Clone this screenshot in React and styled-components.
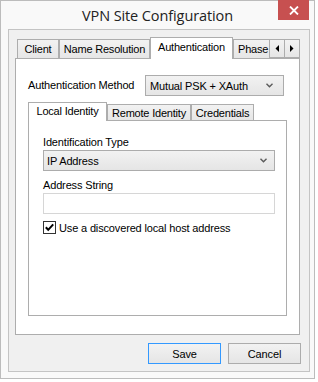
import React from "react";
import styled, { createGlobalStyle } from "styled-components";

const GlobalStyle = createGlobalStyle`
  html, body { margin: 0; padding: 0; background: #ffffff; }
  body { font-family: "Liberation Sans", Arial, sans-serif; font-size: 11px; color: #000; }
  * { box-sizing: border-box; }
`;

const Window = styled.div`
  width: 315px;
  height: 379px;
  border: 1px solid #bcbcbc;
  background: #f9f9f9;
  display: flex;
  flex-direction: column;
`;

const TitleBar = styled.div`
  height: 28px;
  flex-shrink: 0;
  display: grid;
  grid-template-columns: 1fr auto 1fr;
  align-items: center;
`;

const Title = styled.div`
  grid-column: 2;
  font-family: "Open Sans", "Liberation Sans", sans-serif;
  font-size: 14.5px;
  letter-spacing: -0.1px;
  color: #222;
  white-space: nowrap;
  padding-top: 1px;
`;

const CloseButton = styled.div`
  grid-column: 3;
  justify-self: end;
  align-self: start;
  margin-top: -1px;
  margin-right: 5px;
  width: 31px;
  height: 20px;
  background: #c75050;
  display: flex;
  align-items: center;
  justify-content: center;
`;

const Client = styled.div`
  flex: 1;
  margin: 0 4px 6px 7px;
  border: 1px solid #c4c4c4;
  background: #f0f0f0;
  display: flex;
  flex-direction: column;
  padding: 7px 8px 7px 6px;
`;

const TabControl = styled.div`
  flex: ${(p) => (p.$grow ? 1 : "none")};
  display: flex;
  flex-direction: column;
  margin: ${(p) => p.$margin || "0"};
`;

const TabStrip = styled.div`
  height: ${(p) => p.$h}px;
  margin-bottom: -1px;
  padding-left: ${(p) => p.$pl}px;
  display: flex;
  position: relative;
  z-index: 1;
  flex-shrink: 0;
`;

const TabList = styled.div`
  flex: 1;
  display: flex;
  align-items: flex-start;
  overflow: hidden;
`;

const Tab = styled.div`
  flex-shrink: 0;
  width: ${(p) => p.$w}px;
  height: ${(p) => (p.$active ? p.$h : p.$h - 3)}px;
  margin-top: ${(p) => (p.$active ? 0 : 2)}px;
  padding-top: ${(p) => p.$pt}px;
  border: 1px solid #adadad;
  border-bottom: none;
  border-right: ${(p) => (p.$clip ? "none" : "1px solid #adadad")};
  background: ${(p) => (p.$active ? "#ffffff" : "linear-gradient(#f2f2f2, #e6e6e6)")};
  text-align: ${(p) => (p.$clip ? "left" : "center")};
  padding-left: ${(p) => (p.$clip ? 4 : 0)}px;
  white-space: nowrap;
  overflow: hidden;
  font-size: 11px;
  line-height: 13px;
  letter-spacing: -0.2px;
`;

const ScrollButtons = styled.div`
  display: flex;
  margin-top: 2px;
  height: 19px;
  flex-shrink: 0;
`;

const ScrollButton = styled.div`
  width: 16px;
  height: 19px;
  border: 1px solid #adadad;
  margin-left: ${(p) => (p.$dir === "right" ? "-1px" : "0")};
  background: linear-gradient(#f2f2f2, #e6e6e6);
  display: flex;
  align-items: center;
  justify-content: center;
`;

const Panel = styled.div`
  flex: 1;
  border: 1px solid #adadad;
  background: #ffffff;
  display: flex;
  flex-direction: column;
  padding: ${(p) => p.$pad};
`;

const MethodRow = styled.div`
  display: grid;
  grid-template-columns: 117px 139px;
  align-items: center;
`;

const Label = styled.div`
  font-size: 11px;
  line-height: 13px;
  letter-spacing: -0.15px;
  white-space: nowrap;
  margin: ${(p) => p.$margin || "0"};
`;

const ComboBox = styled.div`
  height: 21px;
  border: 1px solid #acacac;
  background: linear-gradient(#f2f2f2, #e5e5e5);
  display: flex;
  align-items: center;
  justify-content: space-between;
  padding: 0 ${(p) => p.$pr}px 0 ${(p) => p.$pl}px;
  font-size: 11px;
  letter-spacing: -0.15px;
  white-space: nowrap;
`;

const TextBox = styled.div`
  height: 21px;
  border: 1px solid #d6d6d6;
  background: #ffffff;
`;

const CheckRow = styled.div`
  display: flex;
  align-items: center;
  gap: 3px;
  margin-top: 7px;
  font-size: 11px;
  letter-spacing: -0.15px;
  white-space: nowrap;
`;

const ButtonRow = styled.div`
  display: flex;
  justify-content: flex-end;
  gap: 7px;
  margin-top: 8px;
  flex-shrink: 0;
`;

const Button = styled.div`
  width: 73px;
  height: 21px;
  border: 1px solid ${(p) => (p.$default ? "#3399ff" : "#acacac")};
  background: linear-gradient(#f2f2f2, #e5e5e5);
  display: flex;
  align-items: center;
  justify-content: center;
  font-size: 11px;
  letter-spacing: -0.1px;
`;

const Chevron = () => (
  <svg width="7" height="5" viewBox="0 0 7 5">
    <path d="M0.5 0.8 L3.5 3.8 L6.5 0.8" fill="none" stroke="#5a5a5a" strokeWidth="1.4" />
  </svg>
);

const Arrow = ({ dir }) => (
  <svg width="4" height="7" viewBox="0 0 4 7">
    {dir === "left" ? <path d="M4 0 L0.5 3.5 L4 7 Z" fill="#000" /> : <path d="M0 0 L3.5 3.5 L0 7 Z" fill="#000" />}
  </svg>
);

const CheckIcon = () => (
  <svg width="13" height="13" viewBox="0 0 13 13">
    <rect x="0.5" y="0.5" width="12" height="12" fill="#fff" stroke="#333" />
    <path d="M2.8 6.3 L5.2 8.8 L10.2 3.3" fill="none" stroke="#000" strokeWidth="2" />
  </svg>
);

const CloseIcon = () => (
  <svg width="10" height="9" viewBox="0 0 10 9">
    <path d="M1 0.5 L9 8.5 M9 0.5 L1 8.5" stroke="#fff" strokeWidth="1.8" />
  </svg>
);

export default function App() {
  return (
    <>
      <GlobalStyle />
      <Window>
        <TitleBar>
          <Title>VPN Site Configuration</Title>
          <CloseButton>
            <CloseIcon />
          </CloseButton>
        </TitleBar>
        <Client>
          <TabControl $grow $margin="0 1px 0 0">
            <TabStrip $h={22} $pl={2}>
              <TabList>
                <Tab $w={42} $h={22} $pt={3}>Client</Tab>
                <Tab $w={91} $h={22} $pt={3}>Name Resolution</Tab>
                <Tab $w={83} $h={22} $pt={3} $active>Authentication</Tab>
                <Tab $w={36} $h={22} $pt={3} $clip>Phase</Tab>
              </TabList>
              <ScrollButtons>
                <ScrollButton $dir="left"><Arrow dir="left" /></ScrollButton>
                <ScrollButton $dir="right"><Arrow dir="right" /></ScrollButton>
              </ScrollButtons>
            </TabStrip>
            <Panel $pad="16px 0 18px 12px">
              <MethodRow>
                <Label>Authentication Method</Label>
                <ComboBox $pl={4} $pr={10}>
                  <span>Mutual PSK + XAuth</span>
                  <Chevron />
                </ComboBox>
              </MethodRow>
              <TabControl $grow $margin="6px 12px 0 0">
                <TabStrip $h={19} $pl={0}>
                  <TabList>
                    <Tab $w={79} $h={19} $pt={2} $active>Local Identity</Tab>
                    <Tab $w={84} $h={19} $pt={2}>Remote Identity</Tab>
                    <Tab $w={63} $h={19} $pt={2}>Credentials</Tab>
                  </TabList>
                </TabStrip>
                <Panel $pad="15px 11px 0 14px">
                  <Label $margin="0 0 1px 0">Identification Type</Label>
                  <ComboBox $pl={3} $pr={7}>
                    <span>IP Address</span>
                    <Chevron />
                  </ComboBox>
                  <Label $margin="8px 0 1px 0">Address String</Label>
                  <TextBox />
                  <CheckRow>
                    <CheckIcon />
                    <span>Use a discovered local host address</span>
                  </CheckRow>
                </Panel>
              </TabControl>
            </Panel>
          </TabControl>
          <ButtonRow>
            <Button $default>Save</Button>
            <Button>Cancel</Button>
          </ButtonRow>
        </Client>
      </Window>
    </>
  );
}
